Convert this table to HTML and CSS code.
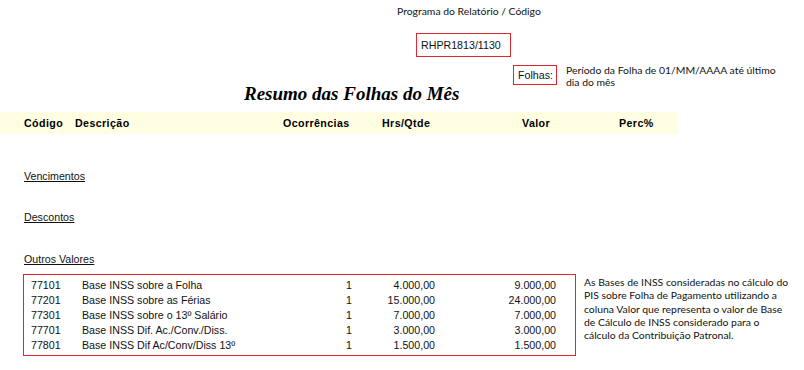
FILE: index.html
```html
<!DOCTYPE html>
<html lang="pt-BR">
<head>
<meta charset="utf-8">
<link rel="stylesheet" href="styles.css">
</head>
<body>
<div class="page">
  <div class="prog">Programa do Relatório / Código</div>
  <div class="code-box">RHPR1813/1130</div>
  <div class="folhas-row">
    <div class="folhas-box">Folhas:</div>
    <div class="folhas-text">Período da Folha de 01/MM/AAAA até último dia do mês</div>
  </div>
  <h1 class="title">Resumo das Folhas do Mês</h1>
  <div class="head-bar">
    <span>Código</span>
    <span>Descrição</span>
    <span>Ocorrências</span>
    <span>Hrs/Qtde</span>
    <span>Valor</span>
    <span>Perc%</span>
  </div>
  <div class="section s-venc">Vencimentos</div>
  <div class="section s-desc">Descontos</div>
  <div class="section s-outros">Outros Valores</div>
  <div class="bottom">
    <div class="rows-box">
      <div class="row"><span>77101</span><span>Base INSS sobre a Folha</span><span class="r">1</span><span class="r">4.000,00</span><span class="r">9.000,00</span></div>
      <div class="row"><span>77201</span><span>Base INSS sobre as Férias</span><span class="r">1</span><span class="r">15.000,00</span><span class="r">24.000,00</span></div>
      <div class="row"><span>77301</span><span>Base INSS sobre o 13º Salário</span><span class="r">1</span><span class="r">7.000,00</span><span class="r">7.000,00</span></div>
      <div class="row"><span>77701</span><span>Base INSS Dif. Ac./Conv./Diss.</span><span class="r">1</span><span class="r">3.000,00</span><span class="r">3.000,00</span></div>
      <div class="row"><span>77801</span><span>Base INSS Dif Ac/Conv/Diss 13º</span><span class="r">1</span><span class="r">1.500,00</span><span class="r">1.500,00</span></div>
    </div>
    <div class="note">As Bases de INSS consideradas no cálculo do PIS sobre Folha de Pagamento utilizando a coluna Valor que representa o valor de Base de Cálculo de INSS considerado para o cálculo da Contribuição Patronal.</div>
  </div>
</div>
</body>
</html>
```
FILE: styles.css
```css
* { box-sizing: border-box; }
html, body { margin: 0; padding: 0; background: #ffffff; }
body { color: #111111; font-family: "Liberation Sans", Arial, sans-serif; font-size: 10.67px; }
.page { width: 804px; height: 370px; overflow: hidden; }

.prog {
  margin: 5px 0 0 397px;
  height: 13px;
  line-height: 13px;
  font-family: Lato, "Open Sans", sans-serif;
  font-size: 10.4px;
}

.code-box {
  margin: 15px 0 0 416px;
  width: 95px;
  height: 24px;
  border: 1px solid #e0262e;
  padding-left: 4px;
  line-height: 22px;
  font-size: 10.67px;
}

.folhas-row {
  display: flex;
  align-items: flex-start;
  margin: 8px 0 0 513px;
}
.folhas-box {
  width: 44px;
  height: 20px;
  border: 1px solid #e0262e;
  padding-left: 4px;
  line-height: 18px;
}
.folhas-text {
  margin: -1px 0 0 9px;
  width: 212px;
  font-family: Lato, "Open Sans", sans-serif;
  font-size: 10.4px;
  line-height: 12px;
}

.title {
  margin: -4px 0 0 244px;
  height: 28px;
  line-height: 20px;
  font-family: "Liberation Serif", "Times New Roman", serif;
  font-style: italic;
  font-weight: bold;
  font-size: 19px;
  color: #000000;
}

.head-bar {
  display: grid;
  grid-template-columns: 51px 208px 99px 140px 97px auto;
  width: 678px;
  height: 22px;
  padding-left: 24px;
  background: #fffee2;
  font-weight: bold;
  letter-spacing: 0.4px;
  line-height: 23px;
  color: #000000;
}

.section {
  margin-left: 24px;
  height: 13px;
  line-height: 13px;
  text-decoration: underline;
}
.s-venc { margin-top: 36px; }
.s-desc { margin-top: 28px; }
.s-outros { margin-top: 29px; }

.bottom {
  display: flex;
  align-items: flex-start;
  margin: 8px 0 0 23px;
}
.rows-box {
  width: 553px;
  height: 82px;
  border: 1px solid #e0262e;
  padding: 3px 0 0 7px;
}
.row {
  display: grid;
  grid-template-columns: 51px 240px 30px 83px 121px;
  height: 15px;
  line-height: 15px;
}
.r { text-align: right; }

.note {
  margin: 2px 0 0 8px;
  width: 208px;
  font-family: Lato, "Open Sans", sans-serif;
  font-size: 10.4px;
  line-height: 13.3px;
}
```
